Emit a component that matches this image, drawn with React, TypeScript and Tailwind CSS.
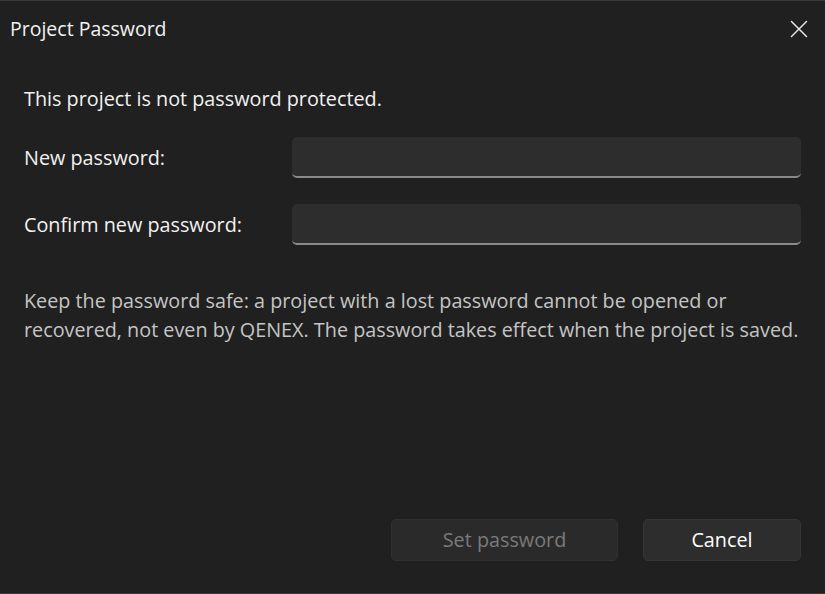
import { X } from "lucide-react"

export default function App() {
  return (
    <div
      className="w-[825px] h-[594px] bg-[#202020] text-white flex flex-col border-t border-b border-[#3a3a3a] overflow-hidden"
      style={{ fontFamily: '"Open Sans", "Noto Sans", sans-serif' }}
    >
      {/* title bar */}
      <div className="flex items-center justify-between h-[55px] pl-[10px] pr-[11px]">
        <span className="text-[19.5px] text-[#f2f2f2]">Project Password</span>
        <X className="w-[30px] h-[30px] text-[#e8e8e8]" strokeWidth={1.2} />
      </div>

      <div className="flex flex-col flex-1 px-[24px]">
        <p className="text-[19.8px] mt-[28px] text-[#f2f2f2]">This project is not password protected.</p>

        <div className="flex items-center mt-[23px]">
          <label className="w-[268px] text-[19.8px] text-[#f2f2f2] pt-[2px]">New password:</label>
          <input className="flex-1 h-[41px] rounded-[5px] bg-[#2d2d2d] border-b-2 border-[#8a8a8a] outline-none" type="password" />
        </div>
        <div className="flex items-center mt-[26px]">
          <label className="w-[268px] text-[19.8px] text-[#f2f2f2] pt-[2px]">Confirm new password:</label>
          <input className="flex-1 h-[41px] rounded-[5px] bg-[#2d2d2d] border-b-2 border-[#8a8a8a] outline-none" type="password" />
        </div>

        <p className="mt-[41px] text-[19.8px] leading-[29px] text-[#c5c5c5] whitespace-nowrap">
          Keep the password safe: a project with a lost password cannot be opened or
          <br />
          recovered, not even by QENEX. The password takes effect when the project is saved.
        </p>

        <div className="flex justify-end gap-[25px] mt-auto mb-[32px]">
          <button className="w-[227px] h-[42px] rounded-[5px] bg-[#2a2a2a] border border-[#303030] text-[19.8px] text-[#7a7a7a]" disabled>
            Set password
          </button>
          <button className="w-[158px] h-[42px] rounded-[5px] bg-[#2d2d2d] border border-[#353535] text-[19.8px] text-white">
            Cancel
          </button>
        </div>
      </div>
    </div>
  )
}
